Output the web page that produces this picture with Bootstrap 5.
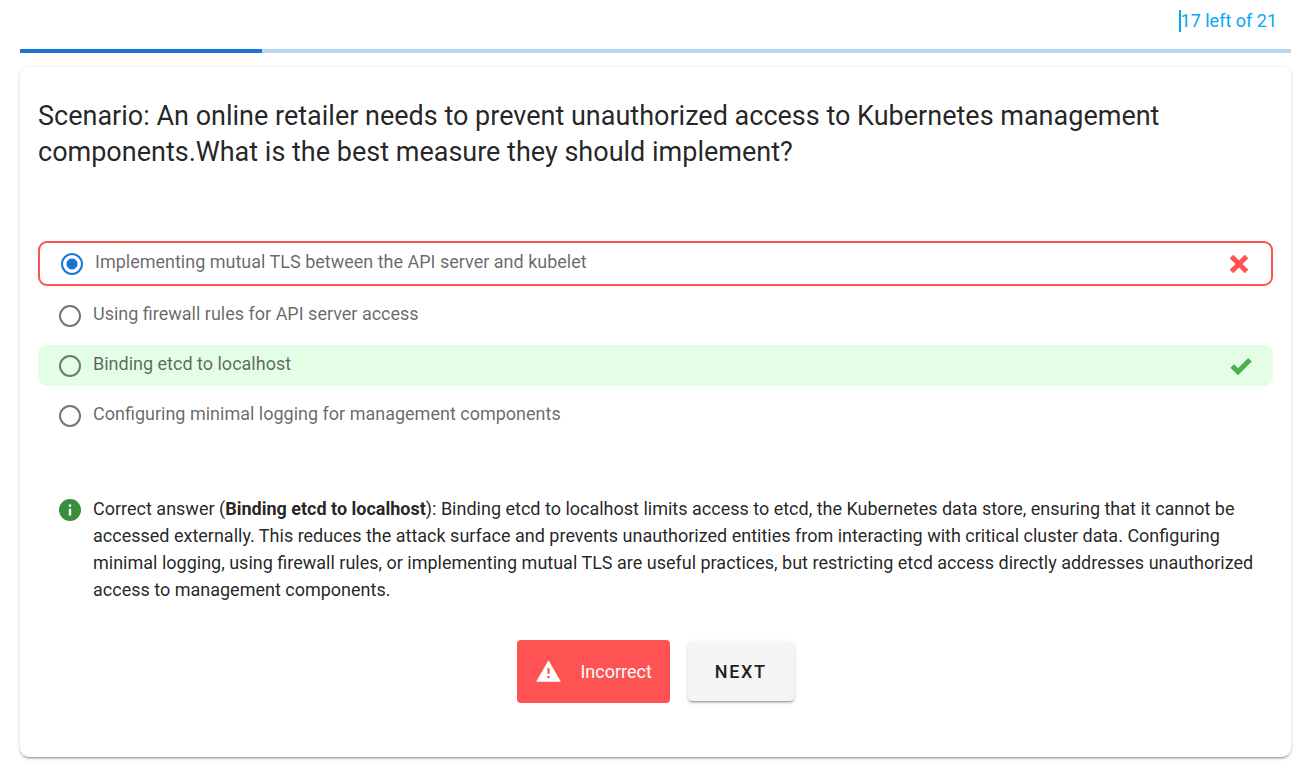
<!DOCTYPE html>
<html lang="en">
<head>
<meta charset="utf-8">
<meta name="viewport" content="width=device-width, initial-scale=1">
<title>Kubernetes quiz</title>
<link rel="stylesheet" href="https://cdn.jsdelivr.net/npm/bootstrap@5.3.0/dist/css/bootstrap.min.css">
<style>
  body { font-family: Roboto, "Liberation Sans", sans-serif; font-size: 18px; line-height: 27px; color: rgba(0,0,0,.87); }
  .page { padding: 7px 21px 18px 20px; }
  .counter { color: #03a9f4; margin-right: 14px; padding-bottom: 15px; }
  .counter-text { border-left: 2px solid #03a9f4; line-height: 22px; margin-top: 3px; margin-bottom: 2px; }
  .quiz-progress { height: 4px; border-radius: 0; background: #bad5f2; }
  .quiz-progress .progress-bar { background: #1976d2; }
  .quiz-card { margin-top: 14px; padding: 31px 18px 54px; border: 0; border-radius: 9px; color: inherit;
    box-shadow: 0 3px 1px -2px rgba(0,0,0,.2), 0 2px 2px 0 rgba(0,0,0,.14), 0 1px 5px 0 rgba(0,0,0,.12); }
  .question { font-size: 27px; line-height: 36px; font-weight: 400; margin-bottom: 71px; }
  .answers { gap: 9px; }
  .answer { padding: 0 20px 0 21px; border-radius: 9px; color: rgba(0,0,0,.6); }
  .answer-wrong { border: 2px solid #ff5252; }
  .answer-right { background: #e3fee5; }
  .answer label { padding: 5px 0 9px 12px; }
  .answer .form-check-input { width: 22px; height: 22px; border: 2px solid #757575; background: none; }
  .answer .form-check-input:checked { border-color: #1976d2; background: radial-gradient(circle, #1976d2 5px, transparent 6px); }
  .answer .form-check-input:focus { box-shadow: none; }
  .explain { margin-top: 59px; padding: 0 18px 0 21px; gap: 12px; }
  .explain svg { margin-top: 4px; }
  .explain strong { font-weight: 700; }
  .actions { margin-top: 37px; gap: 18px; }
  .verdict { background: #ff5252; color: #fff; border-radius: 4px; padding: 18px; gap: 18px; }
  .btn-next { --bs-btn-color: #212121; --bs-btn-bg: #f5f5f5; --bs-btn-border-color: #f5f5f5; --bs-btn-hover-bg: #eee;
    font-size: 18px; line-height: 27px; font-weight: 500; letter-spacing: .09em; padding: 15px 26px; border-radius: 4px;
    box-shadow: 0 3px 1px -2px rgba(0,0,0,.2), 0 2px 2px 0 rgba(0,0,0,.14), 0 1px 5px 0 rgba(0,0,0,.12); }
</style>
</head>
<body>
<main class="page">
  <div class="counter d-flex justify-content-end"><span class="counter-text">17 left of 21</span></div>
  <div class="progress quiz-progress" role="progressbar" aria-label="Quiz progress" aria-valuenow="4" aria-valuemin="0" aria-valuemax="21">
    <div class="progress-bar" style="width: 19.05%"></div>
  </div>
  <section class="card quiz-card">
    <h1 class="question">Scenario: An online retailer needs to prevent unauthorized access to Kubernetes management components.What is the best measure they should implement?</h1>
    <form class="answers d-flex flex-column">
      <div class="answer answer-wrong d-flex align-items-center">
        <input class="form-check-input m-0 flex-shrink-0" type="radio" name="answer" id="a1" checked>
        <label class="flex-grow-1" for="a1">Implementing mutual TLS between the API server and kubelet</label>
        <svg width="24" height="22" viewBox="0 0 24 22" aria-hidden="true"><path d="M4.500 3.500 19.500 18.500M19.500 3.500 4.500 18.500" stroke="#ff5252" stroke-width="5" fill="none"/></svg>
      </div>
      <div class="answer d-flex align-items-center">
        <input class="form-check-input m-0 flex-shrink-0" type="radio" name="answer" id="a2">
        <label class="flex-grow-1" for="a2">Using firewall rules for API server access</label>
      </div>
      <div class="answer answer-right d-flex align-items-center">
        <input class="form-check-input m-0 flex-shrink-0" type="radio" name="answer" id="a3">
        <label class="flex-grow-1" for="a3">Binding etcd to localhost</label>
        <svg width="24" height="22" viewBox="0 0 24 22" aria-hidden="true"><path d="M3.200 11 9 16.800 21 4.800" stroke="#4caf50" stroke-width="5" fill="none"/></svg>
      </div>
      <div class="answer d-flex align-items-center">
        <input class="form-check-input m-0 flex-shrink-0" type="radio" name="answer" id="a4">
        <label class="flex-grow-1" for="a4">Configuring minimal logging for management components</label>
      </div>
    </form>
    <div class="explain d-flex align-items-start">
      <svg class="flex-shrink-0" width="22" height="22" viewBox="0 0 22 22" aria-hidden="true"><circle cx="11" cy="11" r="11" fill="#388e3c"/><path d="M9.800 5.500h2.400v2.300H9.800zM9.800 9.800h2.400v6.700H9.800z" fill="#fff"/></svg>
      <p class="mb-0">Correct answer (<strong>Binding etcd to localhost</strong>): Binding etcd to localhost limits access to etcd, the Kubernetes data store, ensuring that it cannot be accessed externally. This reduces the attack surface and prevents unauthorized entities from interacting with critical cluster data. Configuring minimal logging, using firewall rules, or implementing mutual TLS are useful practices, but restricting etcd access directly addresses unauthorized access to management components.</p>
    </div>
    <div class="actions d-flex justify-content-center align-items-center">
      <div class="verdict d-flex align-items-center" role="status">
        <svg width="27" height="27" viewBox="0 0 24 24" aria-hidden="true"><path fill="#fff" d="M13 14h-2V9h2m0 9h-2v-2h2M1 21h22L12 2 1 21z"/></svg>
        <span>Incorrect</span>
      </div>
      <button type="button" class="btn btn-next">NEXT</button>
    </div>
  </section>
</main>
<script src="https://cdn.jsdelivr.net/npm/bootstrap@5.3.0/dist/js/bootstrap.bundle.min.js"></script>
</body>
</html>
